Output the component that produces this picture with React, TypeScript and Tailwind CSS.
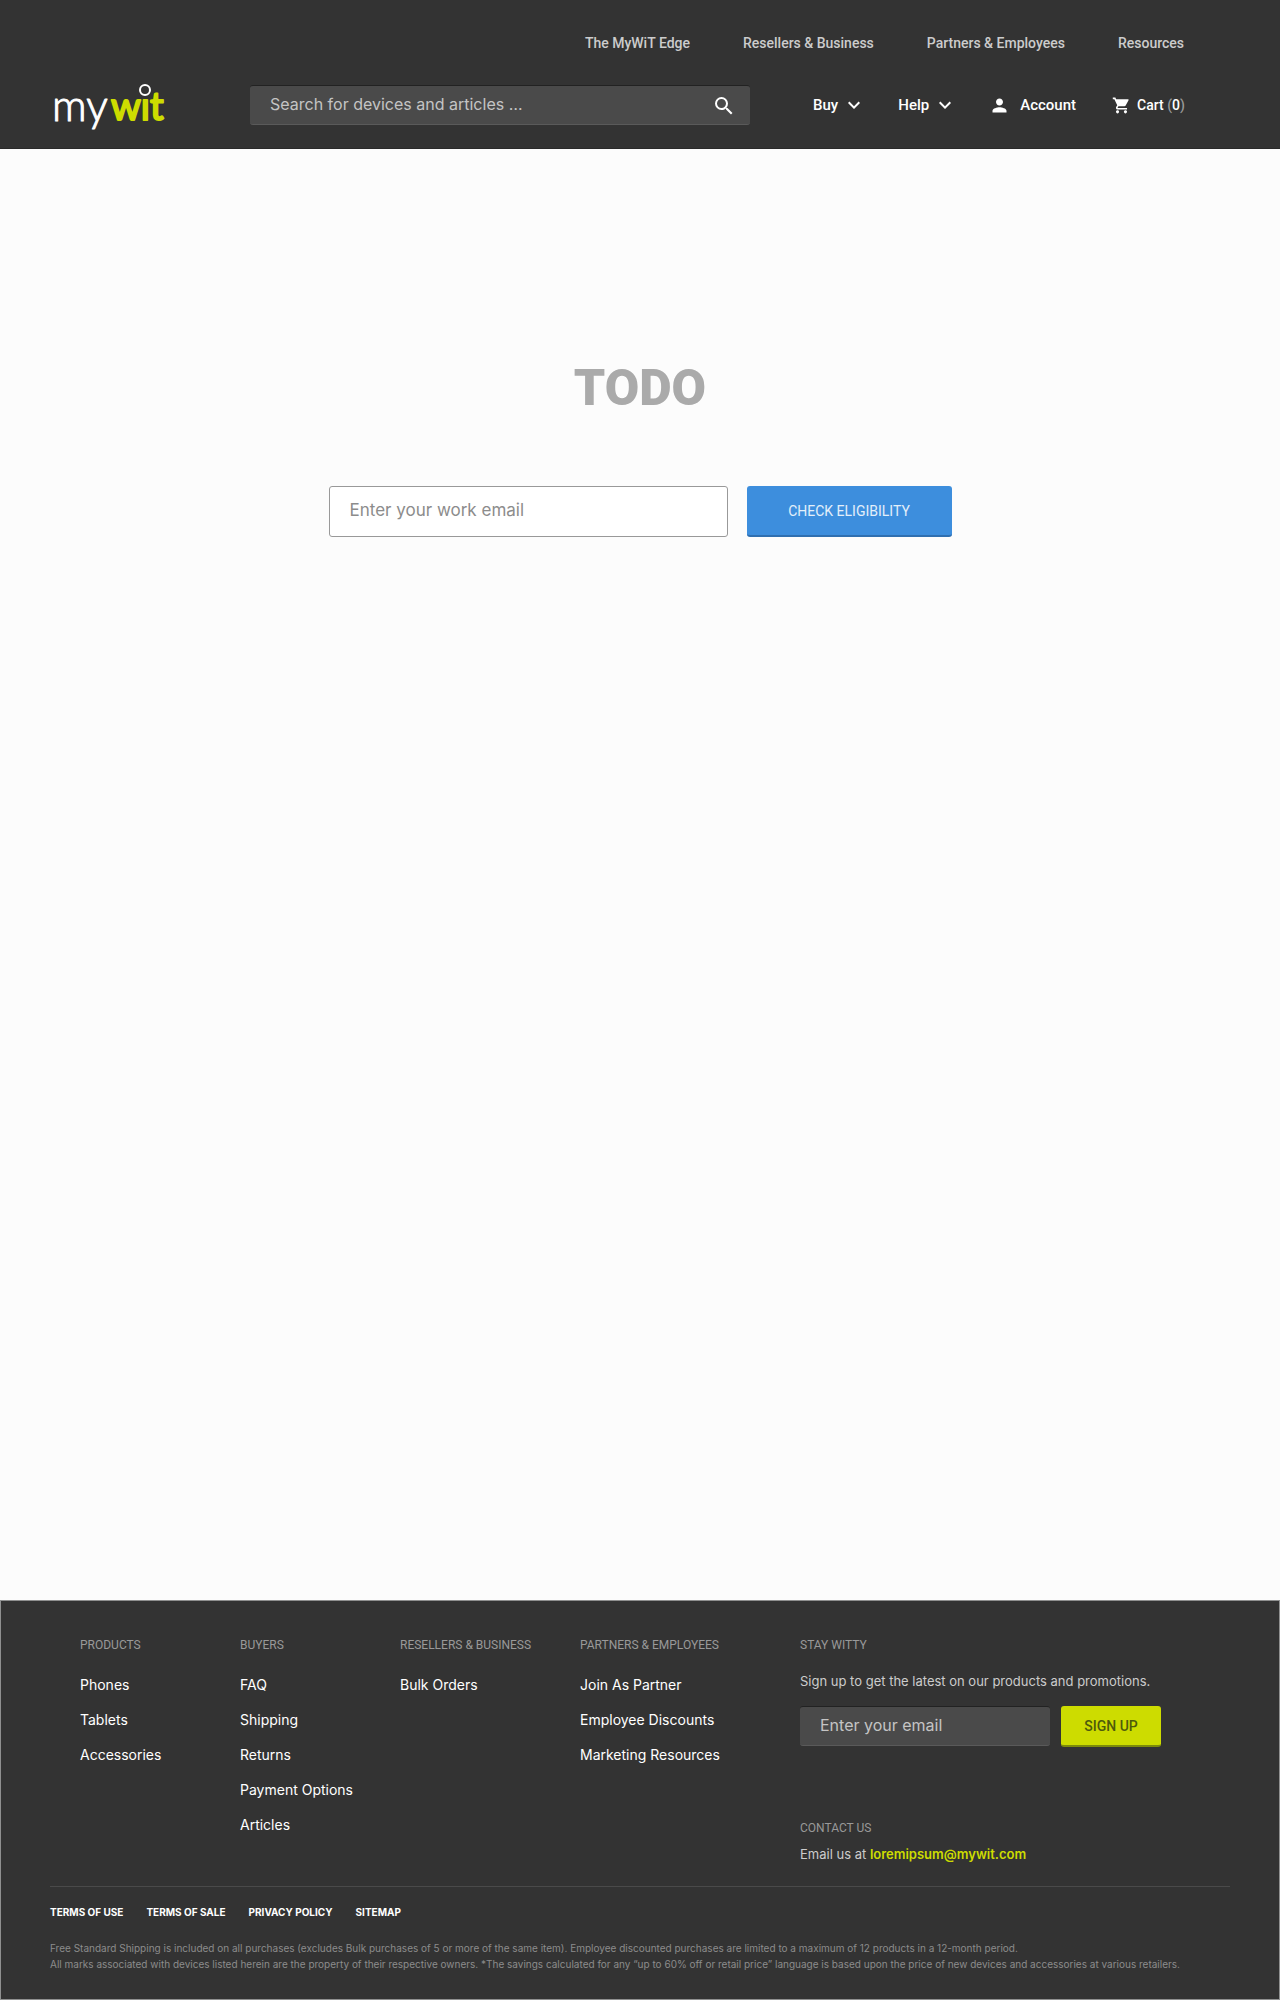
import React from "react";
import { MdExpandMore, MdPerson, MdSearch, MdShoppingCart } from "react-icons/md";

const topLinks = ["The MyWiT Edge", "Resellers & Business", "Partners & Employees", "Resources"];

const footerColumns = [
  { title: "PRODUCTS", links: ["Phones", "Tablets", "Accessories"] },
  { title: "BUYERS", links: ["FAQ", "Shipping", "Returns", "Payment Options", "Articles"] },
  { title: "RESELLERS & BUSINESS", links: ["Bulk Orders"] },
  { title: "PARTNERS & EMPLOYEES", links: ["Join As Partner", "Employee Discounts", "Marketing Resources"] },
];

const legalLinks = ["TERMS OF USE", "TERMS OF SALE", "PRIVACY POLICY", "SITEMAP"];

const darkField =
  "w-full h-10 rounded-[3px] bg-[#4a4a4a] border-t border-b border-t-[#222222] border-b-[#5a5a5a] px-5 pb-0.5 text-base text-[#cccccc] placeholder:text-[#c4c4c4] placeholder:opacity-100 outline-none font-['Inter',sans-serif]";

function Logo() {
  return (
    <a href="#" aria-label="mywit home" className="block shrink-0">
      <svg width="120" height="60" viewBox="0 0 120 60" fontFamily="Lato, sans-serif" strokeLinejoin="round">
        <text x="2" y="46" fontSize="43" fontWeight="300" fill="#ffffff" stroke="#ffffff" strokeWidth="1">my</text>
        <text x="61" y="45" fontSize="38" fontWeight="400" fill="#cddc00" stroke="#cddc00" strokeWidth="2">wıt</text>
        <circle cx="95" cy="15" r="5" fill="none" stroke="#ffffff" strokeWidth="2" />
      </svg>
    </a>
  );
}

function Header() {
  return (
    <header className="bg-[#333333] border-b border-[#2a2a2a] font-['Roboto',sans-serif] pt-8 pb-[13px]">
      <nav aria-label="Secondary" className="flex justify-end gap-[53px] pr-24 h-[22px] items-center text-sm font-medium text-[#cccccc]">
        {topLinks.map((label) => (
          <a key={label} href="#">{label}</a>
        ))}
      </nav>
      <div className="mt-[21px] flex items-center pl-[50px] pr-[95px]">
        <div className="w-[200px] shrink-0">
          <Logo />
        </div>
        <form role="search" className="relative flex-[500]">
          <input type="search" aria-label="Search" placeholder="Search for devices and articles …" className={darkField} />
          <button type="button" aria-label="Submit search" className="absolute right-3.5 top-[9px] text-white">
            <MdSearch size={24} />
          </button>
        </form>
        <nav aria-label="Primary" className="ml-[63px] flex flex-[372] items-center justify-between text-[15px] font-medium text-white">
          <button type="button" className="flex items-center gap-1">
            Buy <MdExpandMore size={24} />
          </button>
          <button type="button" className="flex items-center gap-1">
            Help <MdExpandMore size={24} />
          </button>
          <a href="#" className="mr-1 flex items-center gap-2.5">
            <MdPerson size={21} /> Account
          </a>
          <a href="#" className="flex items-center gap-1.5 text-sm">
            <MdShoppingCart size={19} />
            <span>
              Cart <span className="text-[#999999]">(</span>0<span className="text-[#999999]">)</span>
            </span>
          </a>
        </nav>
      </div>
    </header>
  );
}

function Eligibility() {
  return (
    <main className="flex flex-1 flex-col items-center bg-[#fcfcfc] px-6 pt-[207px]">
      <h1 className="font-['Roboto',sans-serif] text-[50px] leading-[64px] font-black text-[#aaaaaa]">TODO</h1>
      <form className="mt-[66px] flex w-full max-w-[623px] gap-[19px]">
        <input
          type="email"
          aria-label="Work email"
          placeholder="Enter your work email"
          className="h-[51px] min-w-0 flex-1 rounded-[3px] border border-[#999999] bg-white px-5 pb-1 font-['Inter',sans-serif] text-[17px] text-[#333333] outline-none placeholder:text-[#8c8c8c] placeholder:opacity-100"
        />
        <button
          type="button"
          className="h-[51px] w-[205px] rounded-[3px] border-b-2 border-[#2f6fb0] bg-[#3d8edd] font-['Roboto',sans-serif] text-sm text-[#e3effa]"
        >
          CHECK ELIGIBILITY
        </button>
      </form>
    </main>
  );
}

function FooterHeading({ children }: { children: React.ReactNode }) {
  return <h2 className="font-['Roboto',sans-serif] text-xs leading-4 text-[#999999]">{children}</h2>;
}

function Footer() {
  return (
    <footer className="border border-[#8f9090] bg-[#333333] px-[49px] pt-9 pb-[27px] font-['Inter',sans-serif]">
      <div className="grid grid-cols-[160fr_160fr_180fr_220fr_430fr] pb-[22px] pl-[30px]">
        {footerColumns.map((column) => (
          <section key={column.title}>
            <FooterHeading>{column.title}</FooterHeading>
            <ul className="mt-[22px] flex flex-col gap-[15px] text-sm text-white">
              {column.links.map((label) => (
                <li key={label} className="leading-5">
                  <a href="#">{label}</a>
                </li>
              ))}
            </ul>
          </section>
        ))}
        <section className="text-[13px] text-[#cccccc]">
          <FooterHeading>STAY WITTY</FooterHeading>
          <p className="mt-[18px] leading-5">Sign up to get the latest on our products and promotions.</p>
          <form className="mt-[15px] flex gap-[11px]">
            <div className="w-[250px]">
              <input type="email" aria-label="Email" placeholder="Enter your email" className={darkField} />
            </div>
            <button
              type="button"
              className="h-[41px] w-[100px] rounded-[3px] border-b-2 border-[#7c8b0a] bg-[#cddc00] font-['Roboto',sans-serif] text-sm font-medium text-[#4e5a0c]"
            >
              SIGN UP
            </button>
          </form>
          <div className="mt-[73px]">
            <FooterHeading>CONTACT US</FooterHeading>
            <p className="mt-2 leading-5">
              Email us at{" "}
              <a href="mailto:loremipsum@mywit.com" className="font-semibold text-[#cddc00]">
                loremipsum@mywit.com
              </a>
            </p>
          </div>
        </section>
      </div>
      <hr className="border-[#4a4a4a]" />
      <nav aria-label="Legal" className="mt-[17px] flex gap-[23px] text-[10px] leading-4 font-bold text-white">
        {legalLinks.map((label) => (
          <a key={label} href="#">{label}</a>
        ))}
      </nav>
      <div className="mt-5 text-[10px] leading-4 text-[#8c8c8c]">
        <p>
          Free Standard Shipping is included on all purchases (excludes Bulk purchases of 5 or more of the same item). Employee discounted
          purchases are limited to a maximum of 12 products in a 12-month period.
        </p>
        <p>
          All marks associated with devices listed herein are the property of their respective owners. *The savings calculated for any “up to
          60% off or retail price” language is based upon the price of new devices and accessories at various retailers.
        </p>
      </div>
    </footer>
  );
}

export default function App() {
  return (
    <div className="flex min-h-screen flex-col">
      <Header />
      <Eligibility />
      <Footer />
    </div>
  );
}
